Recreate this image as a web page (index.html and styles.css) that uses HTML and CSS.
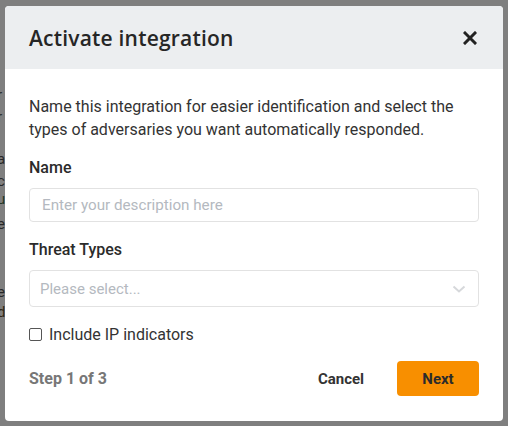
FILE: index.html
```html
<!DOCTYPE html>
<html lang="en">
<head>
<meta charset="utf-8">
<title>Activate integration</title>
<link rel="stylesheet" href="styles.css">
</head>
<body>
<div class="backdrop">
  <div class="behind">
    <span class="frag f1">r</span>
    <span class="frag f2">r</span>
    <span class="frag f3">a</span>
    <span class="frag f4">c</span>
    <span class="frag f5">u</span>
    <span class="frag f6">e</span>
    <span class="frag f7">e</span>
    <span class="frag f8">d</span>
  </div>
  <div class="modal">
    <div class="modal-header">
      <h1 class="modal-title">Activate integration</h1>
      <button class="close-btn" aria-label="Close">
        <svg width="14" height="14" viewBox="0 0 14 14"><path d="M2 2 L12 12 M12 2 L2 12" stroke="#222" stroke-width="3" stroke-linecap="square"/></svg>
      </button>
    </div>
    <div class="modal-body">
      <p class="intro">Name this integration for easier identification and select the types of adversaries you want automatically responded.</p>
      <label class="field-label">Name</label>
      <div class="input">Enter your description here</div>
      <label class="field-label label-threat">Threat Types</label>
      <div class="select">
        <span>Please select...</span>
        <svg class="chevron" width="14" height="8" viewBox="0 0 14 8"><path d="M1.5 1.5 L7 6.5 L12.5 1.5" fill="none" stroke="#d6d8db" stroke-width="2"/></svg>
      </div>
      <div class="check-row">
        <span class="checkbox"></span>
        <span class="check-label">Include IP indicators</span>
      </div>
    </div>
    <div class="modal-footer">
      <span class="step">Step 1 of 3</span>
      <div class="actions">
        <button class="btn-cancel">Cancel</button>
        <button class="btn-next">Next</button>
      </div>
    </div>
  </div>
</div>
</body>
</html>
```

FILE: styles.css
```css
* { box-sizing: border-box; }
html, body { margin: 0; padding: 0; }
body {
  width: 508px;
  height: 426px;
  overflow: hidden;
  background: #7f7f7f;
  font-family: Roboto, "Liberation Sans", sans-serif;
  color: #333;
}
.backdrop {
  position: relative;
  width: 508px;
  height: 426px;
  padding: 6px 5px 5px 5px;
}
.behind { position: absolute; inset: 0; }
.frag {
  position: absolute;
  left: -3px;
  font-size: 15px;
  color: #1e1e1e;
  opacity: 0.9;
}
.f1 { top: 86px; }
.f2 { top: 108px; }
.f3 { top: 150px; }
.f4 { top: 172px; }
.f5 { top: 190px; color: #1a2f1a; }
.f6 { top: 215px; }
.f7 { top: 283px; }
.f8 { top: 303px; color: #2a1c0a; }
.modal {
  position: relative;
  width: 498px;
  height: 415px;
  background: #fff;
  border-radius: 4px;
  overflow: hidden;
  display: flex;
  flex-direction: column;
}
.modal-header {
  height: 63px;
  background: #eceef0;
  display: flex;
  align-items: center;
  justify-content: space-between;
  padding: 0 24px 0 24px;
}
.modal-title {
  margin: 0;
  font-family: "Open Sans", sans-serif;
  font-weight: 600;
  font-size: 21px;
  color: #262626;
  letter-spacing: 0.2px;
}
.close-btn {
  border: 0;
  background: none;
  padding: 0;
  width: 14px;
  height: 14px;
  display: flex;
  margin-right: 2px;
}
.modal-body {
  padding: 26px 24px 0 24px;
  display: flex;
  flex-direction: column;
}
.intro {
  margin: 0;
  font-size: 16px;
  line-height: 23px;
  color: #333;
}
.field-label {
  display: block;
  margin-top: 17px;
  font-weight: 500;
  font-size: 16px;
  line-height: 20px;
  color: #2b2b2b;
}
.label-threat { margin-top: 18px; }
.input {
  margin-top: 10px;
  height: 34px;
  border: 1px solid #e2e2e2;
  border-radius: 4px;
  padding: 0 12px;
  display: flex;
  align-items: center;
  font-size: 15.2px;
  color: #b4b9c0;
}
.select {
  margin-top: 10px;
  height: 37px;
  border: 1px solid #e2e2e2;
  border-radius: 4px;
  padding: 0 12px 0 10px;
  display: flex;
  align-items: center;
  justify-content: space-between;
  font-size: 15px;
  color: #b4b9c0;
}
.check-row {
  margin-top: 17px;
  display: flex;
  align-items: center;
  gap: 7px;
  height: 20px;
}
.checkbox {
  width: 13px;
  height: 13px;
  border: 1px solid #555;
  border-radius: 2px;
  background: #fff;
}
.check-label { font-size: 16px; color: #333; }
.modal-footer {
  margin-top: 17px;
  padding: 0 24px;
  display: flex;
  align-items: center;
  justify-content: space-between;
}
.step {
  font-weight: 700;
  font-size: 16px;
  color: #777;
}
.actions { display: flex; align-items: center; }
.btn-cancel {
  border: 0;
  background: none;
  font-family: Roboto, sans-serif;
  font-weight: 700;
  font-size: 15px;
  color: #333;
  padding: 0;
  width: 82px;
  margin-right: 15px;
  height: 35px;
}
.btn-next {
  border: 0;
  background: #f88f00;
  border-radius: 4px;
  width: 82px;
  height: 35px;
  font-family: Roboto, sans-serif;
  font-weight: 700;
  font-size: 15px;
  color: #2b2b2b;
}
```
